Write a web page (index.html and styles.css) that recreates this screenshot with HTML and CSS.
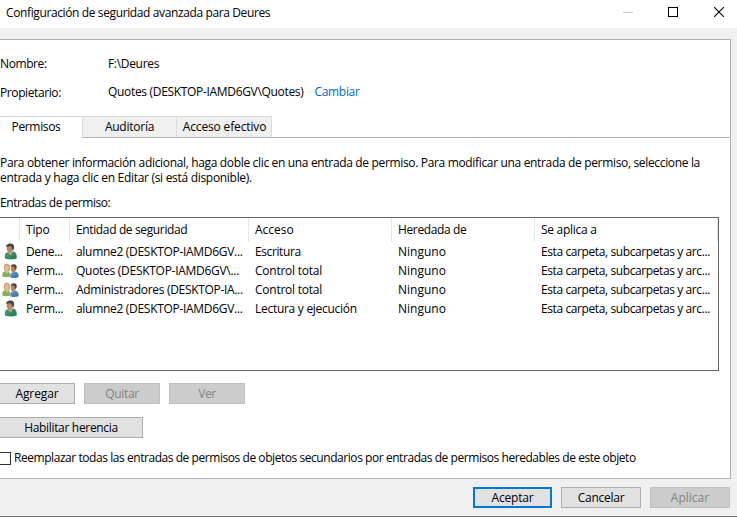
FILE: index.html
```html
<!DOCTYPE html>
<html lang="es">
<head>
<meta charset="utf-8">
<title>Configuración de seguridad avanzada para Deures</title>
<link rel="stylesheet" href="styles.css">
</head>
<body>
<svg width="0" height="0" class="defs" aria-hidden="true">
  <defs>
    <linearGradient id="green" x1="0" y1="0" x2="1" y2="1"><stop offset="0" stop-color="#4aa27c"/><stop offset="1" stop-color="#1f7750"/></linearGradient>
    <linearGradient id="blue" x1="0" y1="0" x2="1" y2="1"><stop offset="0" stop-color="#6f9fd0"/><stop offset="1" stop-color="#2f68a6"/></linearGradient>
    <symbol id="user" viewBox="0 0 16 17">
      <path d="M2 15.500C1.400 12 2.200 9.600 5 9l5.500-.5C13 9.200 14 11.500 13.700 15.500Q8 17.500 2 15.500z" fill="url(#green)"/>
      <path d="M5.300 8.500h4.200l-.5 2.500-1.500 1.500-2-1.800z" fill="#c79a78"/>
      <ellipse cx="6.700" cy="5.300" rx="3" ry="4" fill="#b98768"/>
      <path d="M2.800 3.800C3 1 6.500-.3 9 .8c2.300 1 2.700 3.700 1.300 6.400l-1 .3c0-2-.4-3.500-1.500-4.200z" fill="#4a4440"/>
    </symbol>
    <symbol id="group" viewBox="0 0 17 16">
      <path d="M8.300 14.500c-.5-3 .5-5.300 3-5.500l2.500-.2c2.500.7 3 2.700 2.700 5.400q-4 1.500-8.200.3z" fill="url(#blue)"/>
      <ellipse cx="11.300" cy="5.800" rx="2.500" ry="3.500" fill="#b78465"/>
      <path d="M8.700 3.800c.2-2.300 3-3 4.800-2 1.700 1 1.700 3.200.4 5l-1-.1c0-1.700-.5-2.700-1.500-3.100z" fill="#57463d"/>
      <path d="M.3 13.500c-.3-3 .7-4.900 3-5.200l2.600.2c2 .7 2.700 2.500 2.500 5q-4 1.300-8.100 0z" fill="#86ae55"/>
      <path d="M2 3c.5-2.500 3.500-3 5-1.500C8.600 3 8 6.500 7.500 8.500H3C1.500 7 1.700 5 2 3z" fill="#bda06a"/>
      <ellipse cx="4.800" cy="5.300" rx="2.100" ry="3.200" fill="#e0bd97"/>
      <path d="M3.500 8.500l1.500 1.700 1.300-1.500" fill="#e8d2b5"/>
    </symbol>
  </defs>
</svg>
<div class="window">
  <header class="titlebar">
    <h1 class="ls37">Configuración de seguridad avanzada para Deures</h1>
    <div class="controls">
      <svg width="10" height="10" viewBox="0 0 10 10" shape-rendering="crispEdges"><path d="M0 5.500h10" stroke="#c8c8c8"/></svg>
      <svg width="10" height="10" viewBox="0 0 10 10" shape-rendering="crispEdges"><path d="M.5.5h9v9h-9z" fill="none" stroke="#000"/></svg>
      <svg width="10" height="10" viewBox="0 0 10 10"><path d="M0 0l10 10M10 0L0 10" stroke="#000" stroke-width="1.100"/></svg>
    </div>
  </header>
  <main class="panel">
    <dl class="info">
      <dt class="ls40">Nombre:</dt><dd class="ls30">F:\Deures</dd>
      <dt class="ls40 owner">Propietario:</dt><dd><span class="ls30">Quotes (DESKTOP-IAMD6GV\Quotes)</span><a class="ls30">Cambiar</a></dd>
    </dl>
    <nav class="tabs">
      <div class="tab active"><span class="ls35">Permisos</span></div>
      <div class="tab audit"><span class="ls25">Auditoría</span></div>
      <div class="tab access"><span class="ls13">Acceso efectivo</span></div>
    </nav>
    <p class="intro"><span class="ls33">Para obtener información adicional, haga doble clic en una entrada de permiso. Para modificar una entrada de permiso, seleccione la</span><span class="ls29">entrada y haga clic en Editar (si está disponible).</span></p>
    <p class="caption ls43">Entradas de permiso:</p>
    <section class="list">
      <div class="row head"><span></span><span class="ls20">Tipo</span><span class="ls36">Entidad de seguridad</span><span>Acceso</span><span class="ls36">Heredada de</span><span class="ls27">Se aplica a</span></div>
      <div class="row"><svg class="user"><use href="#user"/></svg><span class="ls35">Dene...</span><span class="ls29">alumne2 (DESKTOP-IAMD6GV...</span><span class="ls40">Escritura</span><span>Ninguno</span><span class="ls40">Esta carpeta, subcarpetas y arc...</span></div>
      <div class="row"><svg class="group"><use href="#group"/></svg><span class="ls30">Perm...</span><span class="ls27">Quotes (DESKTOP-IAMD6GV\...</span><span class="ls25">Control total</span><span>Ninguno</span><span class="ls40">Esta carpeta, subcarpetas y arc...</span></div>
      <div class="row"><svg class="group"><use href="#group"/></svg><span class="ls30">Perm...</span><span class="ls30">Administradores (DESKTOP-IA...</span><span class="ls25">Control total</span><span>Ninguno</span><span class="ls40">Esta carpeta, subcarpetas y arc...</span></div>
      <div class="row"><svg class="user"><use href="#user"/></svg><span class="ls30">Perm...</span><span class="ls29">alumne2 (DESKTOP-IAMD6GV...</span><span class="ls27">Lectura y ejecución</span><span>Ninguno</span><span class="ls40">Esta carpeta, subcarpetas y arc...</span></div>
    </section>
    <div class="actions">
      <button class="add ls10">Agregar</button>
      <button class="ls30" disabled>Quitar</button>
      <button class="ls50" disabled>Ver</button>
    </div>
    <button class="inherit ls30">Habilitar herencia</button>
    <label class="replace"><span class="box"></span><span class="ls43">Reemplazar todas las entradas de permisos de objetos secundarios por entradas de permisos heredables de este objeto</span></label>
  </main>
  <footer class="footer">
    <button class="default ls20">Aceptar</button>
    <button class="cancel ls25">Cancelar</button>
    <button class="apply" disabled>Aplicar</button>
  </footer>
</div>
</body>
</html>
```
FILE: styles.css
```css
* { box-sizing: border-box; }
body {
  margin: 0;
  overflow: hidden;
  font: 12px/16px "Open Sans", "Noto Sans", sans-serif;
  color: #000;
}
h1, p, dl, dd { margin: 0; }
.defs { position: absolute; }
.window {
  width: 737px;
  height: 517px;
  background: #f0f0f0;
  border-bottom: 1px solid #6e6e6e;
  white-space: nowrap;
}

.titlebar {
  display: flex;
  justify-content: space-between;
  height: 28px;
  padding: 5px 13px 0 6px;
  background: #fff;
}
h1 { font-size: 12px; font-weight: 400; }
.controls { display: flex; gap: 35px; padding-top: 2px; }
.controls svg { display: block; }
.controls svg:last-child { margin-left: 1px; }

.panel {
  width: 731px;
  height: 440px;
  margin-top: 11px;
  background: #fff;
  border: solid #b2b2b2;
  border-width: 1px 1px 1px 0;
}
.info {
  display: grid;
  grid-template-columns: 108px 1fr;
  row-gap: 12px;
  height: 76px;
  padding-top: 16px;
  align-content: start;
}
.owner { padding-top: 1px; }
.info a { margin-left: 11px; color: #0066cc; }

.tabs {
  display: flex;
  height: 22px;
  box-shadow: inset 0 -1px #b2b2b2;
}
.tab {
  height: 21px;
  padding-top: 2px;
  border: solid #d9d9d9;
  border-width: 1px 1px 0 0;
  background: #f0f0f0;
  text-align: center;
}
.tab.active { width: 83px; height: 22px; padding-right: 10px; background: #fff; }
.audit { width: 94px; }
.access { width: 95px; padding-left: 1px; }

.intro { margin-top: 17px; line-height: 15px; }
.intro span { display: block; }
.caption { margin-top: 10px; }

.list {
  width: 719px;
  height: 154px;
  margin-top: 6px;
  border: solid #646464;
  border-width: 1px 1px 1px 0;
}
.row {
  display: grid;
  grid-template-columns: 20px 50px 179px 143px 143px 183px;
  height: 19px;
}
.row span { padding: 1px 0 0 6px; }
.row svg { display: block; }
.user { width: 16px; height: 17px; margin-left: 3px; }
.group { width: 17px; height: 16px; margin: 1px 0 0 2px; }
.head { height: 24px; margin-bottom: 1px; }
.head span { padding-top: 4px; border-right: 1px solid #e5e5e5; }

button {
  height: 21px;
  padding: 0;
  border: 1px solid #adadad;
  border-radius: 0;
  background: #e1e1e1;
  color: #000;
  font: inherit;
  line-height: 17px;
}
button:disabled { background: #ccc; border-color: #bfbfbf; color: #838383; }
.actions { display: flex; gap: 9px; margin-top: 12px; }
.actions button { width: 76px; }
.actions .add { width: 75px; border-left: 0; }
.inherit { display: block; width: 143px; margin-top: 13px; border-left: 0; }
.replace { display: flex; gap: 3px; margin-top: 12px; }
.box {
  width: 11px;
  height: 13px;
  margin-top: 2px;
  border: 1px solid #333;
  border-left: 0;
}

.footer {
  display: flex;
  justify-content: flex-end;
  gap: 9px;
  padding: 8px 7px 0 0;
}
.default { width: 79px; border: 2px solid #0078d7; line-height: 15px; }
.cancel, .apply { width: 80px; }

.ls10 { letter-spacing: -.1px; }
.ls13 { letter-spacing: -.14px; }
.ls20 { letter-spacing: -.2px; }
.ls25 { letter-spacing: -.25px; }
.ls27 { letter-spacing: -.28px; }
.ls29 { letter-spacing: -.3px; }
.ls30 { letter-spacing: -.32px; }
.ls33 { letter-spacing: -.338px; }
.ls35 { letter-spacing: -.35px; }
.ls36 { letter-spacing: -.365px; }
.ls37 { letter-spacing: -.38px; }
.ls40 { letter-spacing: -.4px; }
.ls43 { letter-spacing: -.443px; }
.ls50 { letter-spacing: -.5px; }
```
